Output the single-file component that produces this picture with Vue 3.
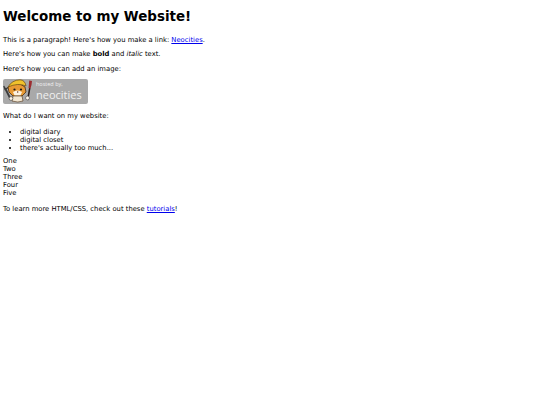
<template>
  <div class="page">
    <h1>Welcome to my Website!</h1>
    <p>This is a paragraph! Here's how you make a link: <a href="#">Neocities</a>.</p>
    <p>Here's how you can make <strong>bold</strong> and <em>italic</em> text.</p>
    <p>Here's how you can add an image:</p>
    <div class="badge">
      <svg class="cat" viewBox="0 0 33 25" width="33" height="25">
        <!-- wrench -->
        <path d="M2 9 L7 19" stroke="#3c3c3c" stroke-width="1.8" fill="none" />
        <path d="M0.8 7 L2.2 10.5 L5 8.5" stroke="#3c3c3c" stroke-width="1.3" fill="none" />
        <!-- ears and head -->
        <path d="M5 8 L10 5 L17 5 L22 8 L23 13 L19 17 L10 17 L6 13 Z" fill="#e89a35" stroke="#4a2d12" stroke-width="0.8" />
        <!-- hard hat -->
        <path d="M5 8 Q9 1 17 0.8 Q22 1 23 7 Q15 3.5 5 8 Z" fill="#f0c22c" stroke="#6b4a12" stroke-width="0.7" />
        <!-- muzzle -->
        <path d="M10 13 Q14.5 10 19 13 L17.5 16.5 L11.5 16.5 Z" fill="#fdf3e2" />
        <circle cx="11.5" cy="10.5" r="1.1" fill="#1e1a16" />
        <circle cx="18" cy="10.5" r="1.1" fill="#1e1a16" />
        <circle cx="14.7" cy="13" r="0.7" fill="#5a2a1a" />
        <!-- body and paws -->
        <path d="M10 17 L19 17 L20 22 Q15 24 9 22 Z" fill="#f3e7d2" stroke="#4a2d12" stroke-width="0.6" />
        <circle cx="8" cy="19.5" r="1.9" fill="#fff5e6" stroke="#3c3c3c" stroke-width="0.6" />
        <!-- paint brush -->
        <path d="M26.8 9 L24.6 21" stroke="#2a2020" stroke-width="1.5" />
        <path d="M26.2 1.5 L29 2 L28.5 6 L27.5 9.5 L25.6 9 Z" fill="#9c2c30" />
        <circle cx="24.5" cy="19" r="1.9" fill="#fbf6ec" stroke="#3a3030" stroke-width="0.5" />
      </svg>
      <div class="badge-text">
        <span class="hosted">hosted by,</span>
        <span class="name">neocities</span>
      </div>
    </div>
    <p>What do I want on my website:</p>
    <ul>
      <li>digital diary</li>
      <li>digital closet</li>
      <li>there's actually too much...</li>
    </ul>
    <div class="lines">
      <div v-for="item in numbers" :key="item">{{ item }}</div>
    </div>
    <p class="last">To learn more HTML/CSS, check out these <a href="#">tutorials</a>!</p>
  </div>
</template>

<script setup>
const numbers = ['One', 'Two', 'Three', 'Four', 'Five']
</script>

<style scoped>
.page {
  padding: 9px 3px 0;
  font-family: "DejaVu Sans", sans-serif;
  font-size: 6.8px;
  line-height: 8px;
  color: #000;
}

h1 {
  margin: 0 0 10.5px;
  font-size: 13.45px;
  line-height: 16px;
  font-weight: bold;
}

p {
  margin: 6.6px 0;
}

a {
  color: #00e;
}

.badge {
  display: flex;
  align-items: center;
  width: 85px;
  height: 25px;
  margin-bottom: 8px;
  background: #a9a9a9;
  border-radius: 2px;
}

.cat {
  flex: none;
}

.badge-text {
  display: flex;
  flex-direction: column;
  color: #f0f0f0;
  font-family: "Open Sans", sans-serif;
}

.hosted {
  font-size: 5.5px;
  line-height: 7px;
}

.name {
  font-size: 11px;
  line-height: 15px;
  margin-top: -1px;
}

ul {
  margin: 7.6px 0 5.6px;
  padding-left: 17px;
}

.lines {
  margin-top: 5.6px;
}

.last {
  margin-top: 7.6px;
}
</style>
